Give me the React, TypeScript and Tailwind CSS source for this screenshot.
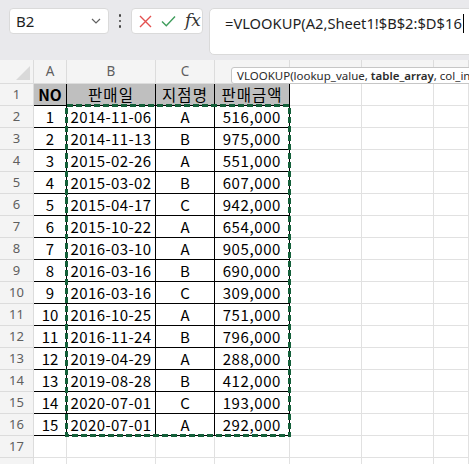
import React from 'react';

const ROWS: [number, string, string, string][] = [
  [1, '2014-11-06', 'A', '516,000'],
  [2, '2014-11-13', 'B', '975,000'],
  [3, '2015-02-26', 'A', '551,000'],
  [4, '2015-03-02', 'B', '607,000'],
  [5, '2015-04-17', 'C', '942,000'],
  [6, '2015-10-22', 'A', '654,000'],
  [7, '2016-03-10', 'A', '905,000'],
  [8, '2016-03-16', 'B', '690,000'],
  [9, '2016-03-16', 'C', '309,000'],
  [10, '2016-10-25', 'A', '751,000'],
  [11, '2016-11-24', 'B', '796,000'],
  [12, '2019-04-29', 'A', '288,000'],
  [13, '2019-08-28', 'B', '412,000'],
  [14, '2020-07-01', 'C', '193,000'],
  [15, '2020-07-01', 'A', '292,000'],
];

// D..G headers sit under the function tooltip, so only A..C show a letter
const COLS = ['A', 'B', 'C', '', '', '', ''];
const cellFont = { fontFamily: '"Noto Sans CJK KR", "Noto Sans", sans-serif' };

function RowHead({ n }: { n?: number }) {
  return (
    <div className="h-[22px] flex items-center justify-center bg-[#f4f4f4] border-r border-b border-[#dcdcdc] text-[13px] text-[#5f5f5f]">
      {n}
    </div>
  );
}

function Empty({ n = 3 }: { n?: number }) {
  return (
    <>
      {Array.from({ length: n }).map((_, i) => (
        <div key={i} className="h-[22px] border-r border-b border-[#e1e1e1] bg-white" />
      ))}
    </>
  );
}

export default function App() {
  return (
    <div
      className="relative w-[469px] h-[464px] overflow-hidden bg-[#e9e9ec]"
      style={{ fontFamily: '"Noto Sans", "Noto Sans CJK KR", sans-serif' }}
    >
      {/* formula bar */}
      <div className="h-[60px] flex items-start pt-[8px] pl-[9px]">
        <div className="w-[100px] h-[26px] shrink-0 bg-white rounded-[4px] border border-[#dadada] flex items-center justify-between pl-[6px] pr-[7px]">
          <span className="text-[15px] text-[#1f1f1f] leading-none">B2</span>
          <svg width="10" height="6" viewBox="0 0 10 6">
            <path d="M1 1l4 4 4-4" fill="none" stroke="#616161" strokeWidth="1.2" />
          </svg>
        </div>
        <div className="w-[22px] h-[26px] shrink-0 flex flex-col items-center justify-center gap-[3px]">
          <span className="w-[2.5px] h-[2.5px] rounded-full bg-[#444]" />
          <span className="w-[2.5px] h-[2.5px] rounded-full bg-[#444]" />
          <span className="w-[2.5px] h-[2.5px] rounded-full bg-[#444]" />
        </div>
        <div className="w-[72px] h-[26px] shrink-0 bg-white rounded-[4px] border border-[#dadada] flex items-center pl-[7px] gap-[9px]">
          <svg width="13" height="13" viewBox="0 0 13 13">
            <path d="M1 1l11 11M12 1L1 12" stroke="#e3504f" strokeWidth="1.4" />
          </svg>
          <svg width="15" height="12" viewBox="0 0 15 12">
            <path d="M1 6.5l4.3 4.3L14 1.5" fill="none" stroke="#3f9d5c" strokeWidth="1.4" />
          </svg>
          <span
            className="text-[17px] italic text-[#333] leading-none -mt-[2px]"
            style={{ fontFamily: '"DejaVu Serif", "Liberation Serif", serif' }}
          >
            fx
          </span>
        </div>
        <div className="ml-[6px] w-[290px] h-[47px] shrink-0 bg-white rounded-[5px] border border-[#dadada] pl-[15px] pt-[2px] whitespace-nowrap">
          <span className="text-[14.7px] text-[#1f1f1f]">=VLOOKUP(A2,Sheet1!$B$2:$D$16</span>
          <span className="inline-block w-[1px] h-[19px] bg-black align-middle -mt-[2px] ml-[1px]" />
        </div>
      </div>

      {/* grid */}
      <div className="grid grid-cols-[34px_33px_89px_59px_75px_72px_72px_1fr] bg-white">
        {/* column headers */}
        <div className="relative h-[24px] bg-[#f4f4f4] border-r border-b border-[#dcdcdc]">
          <svg className="absolute right-[3px] bottom-[3px]" width="14" height="14" viewBox="0 0 14 14">
            <path d="M14 0L14 14L0 14Z" fill="#d9d9d9" />
          </svg>
        </div>
        {COLS.map((c, i) => (
          <div
            key={i}
            className="h-[24px] flex items-center justify-center bg-[#f4f4f4] border-r border-b border-[#dcdcdc] text-[13.5px] text-[#5f5f5f]"
          >
            {c}
          </div>
        ))}

        {/* row 1 headers */}
        <RowHead n={1} />
        {['NO', '판매일', '지점명', '판매금액'].map((h, i) => (
          <div
            key={h}
            className={`h-[22px] flex items-center justify-center bg-[#bfbfbf] border-r border-b border-black text-[15.5px] text-black leading-none ${i === 0 ? 'font-semibold' : 'tracking-[1px]'}`}
            style={cellFont}
          >
            {h}
          </div>
        ))}
        <Empty />

        {ROWS.map(([no, date, br, amt], i) => (
          <React.Fragment key={i}>
            <RowHead n={i + 2} />
            <div className="h-[22px] flex items-center justify-center border-r border-b border-black text-[15px] text-black leading-none" style={cellFont}>
              {no}
            </div>
            <div className="h-[22px] flex items-center justify-center border-r border-b border-black text-[15px] text-black leading-none tracking-[0.4px]" style={cellFont}>
              {date}
            </div>
            <div className="h-[22px] flex items-center justify-center border-r border-b border-black text-[15px] text-black leading-none" style={cellFont}>
              {br}
            </div>
            <div className="h-[22px] flex items-center justify-end pr-[8px] border-r border-b border-black text-[15px] text-black leading-none tracking-[0.6px]" style={cellFont}>
              {amt}
            </div>
            <Empty />
          </React.Fragment>
        ))}

        <RowHead n={17} />
        <Empty n={7} />
        <RowHead />
        <Empty n={7} />
      </div>

      {/* reference range marquee */}
      <svg className="absolute left-[65px] top-[104px]" width="226" height="333" viewBox="0 0 226 333" shapeRendering="crispEdges">
        <rect x="1.5" y="1.5" width="223" height="330" fill="none" stroke="#14603a" strokeWidth="3" strokeDasharray="6 3" />
      </svg>

      {/* function tooltip */}
      <div className="absolute left-[231px] top-[67px] h-[17px] w-[260px] bg-white border border-[#c6c6c6] rounded-[3px] pl-[5px] flex items-center text-[11.5px] text-[#2b2b2b] leading-none whitespace-nowrap overflow-hidden">
        <span>VLOOKUP(lookup_value,&nbsp;<b className="font-semibold">table_array</b>, col_index_num</span>
      </div>
    </div>
  );
}
